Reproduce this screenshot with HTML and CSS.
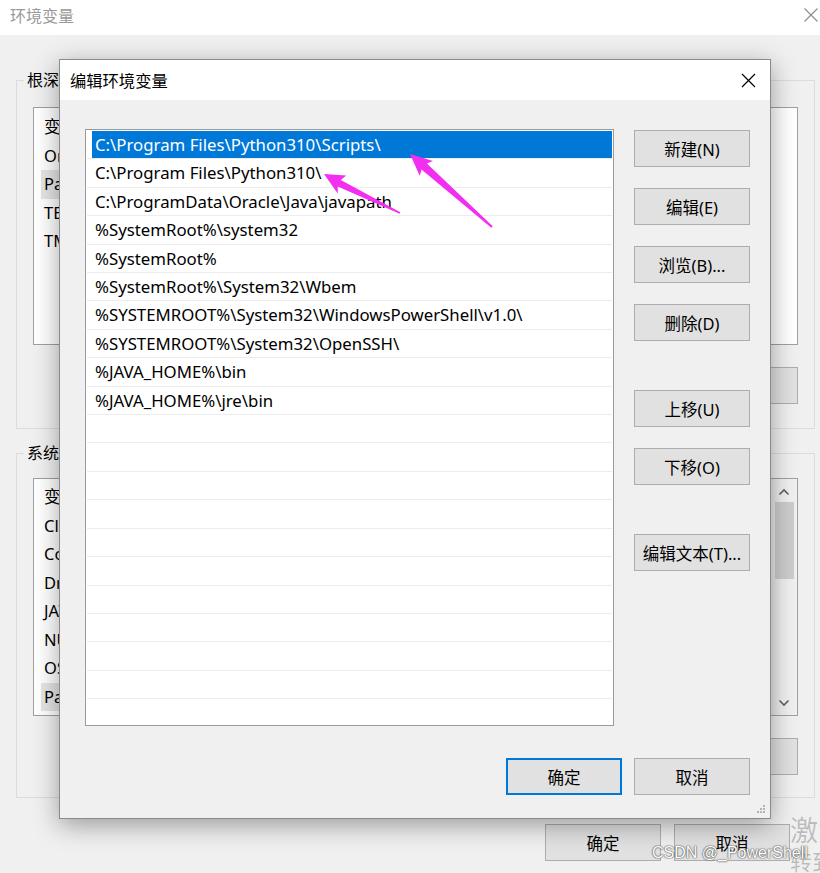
FILE: index.html
```html
<!DOCTYPE html>
<html lang="zh-CN">
<head>
<meta charset="utf-8">
<title>环境变量</title>
<link rel="stylesheet" href="styles.css">
</head>
<body>
<div class="win">
  <div class="win-title">
    <span class="win-title-text">环境变量</span>
    <svg class="win-close" width="14" height="14" viewBox="0 0 14 14"><path d="M0.5 0.5 L13.5 13.5 M13.5 0.5 L0.5 13.5" stroke="#8c8c8c" stroke-width="1.1" fill="none"/></svg>
  </div>
  <div class="win-body">
    <fieldset class="group">
      <legend>根深 的用户变量(U)</legend>
      <div class="group-in">
        <div class="lv">
          <div class="lv-rows">
            <div class="lv-row"><span class="c1">变量</span><span>值</span></div>
            <div class="lv-row"><span class="c1">OneDrive</span><span>C:\Users\根深\OneDrive</span></div>
            <div class="lv-row hl"><span class="c1">Path</span><span>C:\Program Files\Python310\Scripts\;...</span></div>
            <div class="lv-row"><span class="c1">TEMP</span><span>%USERPROFILE%\AppData\Local\Temp</span></div>
            <div class="lv-row"><span class="c1">TMP</span><span>%USERPROFILE%\AppData\Local\Temp</span></div>
          </div>
        </div>
        <div class="btn-row">
          <button class="btn">新建(N)...</button>
          <button class="btn">编辑(E)...</button>
          <button class="btn">删除(D)</button>
        </div>
      </div>
    </fieldset>
    <fieldset class="group group-sys">
      <legend>系统变量(S)</legend>
      <div class="group-in">
        <div class="lv lv-scroll">
          <div class="lv-rows">
            <div class="lv-row"><span class="c1">变量</span><span>值</span></div>
            <div class="lv-row"><span class="c1">ClassPath</span><span>.;%JAVA_HOME%\lib</span></div>
            <div class="lv-row"><span class="c1">ComSpec</span><span>C:\Windows\system32\cmd.exe</span></div>
            <div class="lv-row"><span class="c1">DriverData</span><span>C:\Windows\System32\Drivers\DriverData</span></div>
            <div class="lv-row"><span class="c1">JAVA_HOME</span><span>C:\Program Files\Java\jdk1.8.0</span></div>
            <div class="lv-row"><span class="c1">NUMBER_OF_PROCESSORS</span><span>8</span></div>
            <div class="lv-row"><span class="c1">OS</span><span>Windows_NT</span></div>
            <div class="lv-row hl"><span class="c1">Path</span><span>C:\ProgramData\Oracle\Java\javapath;...</span></div>
          </div>
          <div class="sb">
            <svg class="sb-arrow" width="12" height="8" viewBox="0 0 12 8"><path d="M1.5 6.5 L6 2 L10.5 6.5" stroke="#606060" stroke-width="1.6" fill="none"/></svg>
            <div class="sb-track"><div class="sb-thumb"></div></div>
            <svg class="sb-arrow" width="12" height="8" viewBox="0 0 12 8"><path d="M1.5 1.5 L6 6 L10.5 1.5" stroke="#606060" stroke-width="1.6" fill="none"/></svg>
          </div>
        </div>
        <div class="btn-row">
          <button class="btn">新建(W)...</button>
          <button class="btn">编辑(I)...</button>
          <button class="btn">删除(L)</button>
        </div>
      </div>
    </fieldset>
    <div class="win-foot">
      <button class="btn">确定</button>
      <button class="btn">取消</button>
    </div>
  </div>
</div>

<div class="dlg">
  <div class="dlg-title">
    <span>编辑环境变量</span>
    <svg width="15" height="15" viewBox="0 0 15 15"><path d="M1 1 L14 14 M14 1 L1 14" stroke="#000" stroke-width="1.2" fill="none"/></svg>
  </div>
  <div class="dlg-body">
    <div class="dlg-main">
      <div class="pathlist">
        <div class="prow sel"><span>C:\Program Files\Python310\Scripts\</span></div>
        <div class="prow"><span>C:\Program Files\Python310\</span></div>
        <div class="prow"><span>C:\ProgramData\Oracle\Java\javapath</span></div>
        <div class="prow"><span>%SystemRoot%\system32</span></div>
        <div class="prow"><span>%SystemRoot%</span></div>
        <div class="prow"><span>%SystemRoot%\System32\Wbem</span></div>
        <div class="prow"><span>%SYSTEMROOT%\System32\WindowsPowerShell\v1.0\</span></div>
        <div class="prow"><span>%SYSTEMROOT%\System32\OpenSSH\</span></div>
        <div class="prow"><span>%JAVA_HOME%\bin</span></div>
        <div class="prow"><span>%JAVA_HOME%\jre\bin</span></div>
        <div class="prow"><span></span></div>
        <div class="prow"><span></span></div>
        <div class="prow"><span></span></div>
        <div class="prow"><span></span></div>
        <div class="prow"><span></span></div>
        <div class="prow"><span></span></div>
        <div class="prow"><span></span></div>
        <div class="prow"><span></span></div>
        <div class="prow"><span></span></div>
        <div class="prow"><span></span></div>
        <div class="prow"><span></span></div>
      </div>
      <div class="side">
        <button class="btn">新建(N)</button>
        <button class="btn">编辑(E)</button>
        <button class="btn">浏览(B)...</button>
        <button class="btn">删除(D)</button>
        <button class="btn spaced">上移(U)</button>
        <button class="btn">下移(O)</button>
        <button class="btn spaced">编辑文本(T)...</button>
      </div>
    </div>
    <div class="dlg-foot">
      <button class="btn default">确定</button>
      <button class="btn">取消</button>
    </div>
  </div>
  <svg class="grip" width="10" height="10" viewBox="0 0 10 10">
    <rect x="7" y="1" width="2" height="2" fill="#b4b4b4"/>
    <rect x="4" y="4" width="2" height="2" fill="#b4b4b4"/>
    <rect x="7" y="4" width="2" height="2" fill="#b4b4b4"/>
    <rect x="1" y="7" width="2" height="2" fill="#b4b4b4"/>
    <rect x="4" y="7" width="2" height="2" fill="#b4b4b4"/>
    <rect x="7" y="7" width="2" height="2" fill="#b4b4b4"/>
  </svg>
</div>

<svg class="annot" width="820" height="873" viewBox="0 0 820 873">
  <polygon fill="#f22ff0" points="410,154 433,161.1 426.9,163.6 492.7,226.3 491.3,227.7 421.5,169.6 419.8,176.1"/>
  <polygon fill="#f22ff0" points="324,174 346.3,175.6 340.8,180.1 400.3,212.3 399.7,213.7 337.8,186.5 337.7,193.6"/>
</svg>

<div class="activate">激活 Windows<span class="activate-sub">转到“设置”以激活 Windows。</span></div>
<div class="csdn">CSDN @_PowerShell</div>
</body>
</html>
```

FILE: styles.css
```css
* { box-sizing: border-box; }
html, body { margin: 0; padding: 0; }
body {
  width: 820px;
  height: 873px;
  overflow: hidden;
  position: relative;
  background: #f0f0f0;
  color: #000;
  font-family: "Noto Sans", "Noto Sans CJK SC", sans-serif;
  font-size: 15px;
}

/* background window */
.win-title {
  height: 35px;
  background: #fff;
  display: flex;
  align-items: center;
  justify-content: space-between;
  padding: 0 2px 5px 10px;
}
.win-title-text { color: #9a9a9a; font-size: 16px; }
.win-close { display: block; }

.win-body { padding: 37px 5px 0 16px; }

.group {
  margin: 0;
  padding: 0;
  min-width: 0;
  border: 1px solid #dcdcdc;
}
.group legend {
  margin-left: 7px;
  padding: 0 3px;
  font-size: 16px;
  line-height: 16px;
  height: 16px;
  white-space: nowrap;
}
.group-in { padding: 19px 16px 24px 16px; }
.group-sys { margin-top: 16px; }
.group-sys .group-in { padding: 17px 16px 22px 16px; }

.lv {
  height: 238px;
  border: 1px solid #a0a0a0;
  background: #fff;
  padding: 5px 0 0 7px;
  overflow: hidden;
}
.lv-scroll { display: flex; padding: 0 0 0 7px; }
.lv-scroll .lv-rows { flex: 1; padding-top: 4px; }
.lv-row {
  height: 28.5px;
  line-height: 28.5px;
  padding-left: 3px;
  white-space: nowrap;
  font-size: 16.5px;
  display: flex;
  width: calc(100% - 30px);
}
.lv-row .c1 { width: 230px; flex: none; }
.lv-row.hl { background: #e5e5e5; }

.sb {
  width: 26px;
  flex: none;
  background: linear-gradient(to right, #e6e6e6, #f0f0f0 40%);
  display: flex;
  flex-direction: column;
  align-items: center;
  padding: 9px 0 8px;
}
.sb-arrow { display: block; flex: none; }
.sb-track { flex: 1; width: 100%; padding: 6px 3px 8px 4px; }
.sb-thumb { height: 77px; background: #cdcdcd; }

.btn-row {
  margin-top: 22px;
  display: flex;
  justify-content: flex-end;
  gap: 13px;
}
.win-foot {
  margin-top: 26px;
  display: flex;
  justify-content: flex-end;
  gap: 13px;
  padding-right: 25px;
}

.btn {
  width: 116px;
  height: 37px;
  padding: 0;
  background: #e1e1e1;
  border: 1px solid #adadad;
  border-radius: 0;
  color: #000;
  font-family: "Noto Sans", "Noto Sans CJK SC", sans-serif;
  font-size: 16.5px;
  white-space: nowrap;
}
.btn.default { border: 2px solid #0078d7; }

/* edit dialog */
.dlg {
  position: absolute;
  left: 59px;
  top: 59px;
  width: 712px;
  height: 760px;
  border: 1px solid #8a8a8a;
  background: #f0f0f0;
  box-shadow: 0 6px 24px rgba(0, 0, 0, 0.36);
  display: flex;
  flex-direction: column;
}
.dlg-title {
  height: 40px;
  flex: none;
  background: #fff;
  display: flex;
  align-items: center;
  justify-content: space-between;
  padding: 0 14px 0 10px;
  font-size: 16.3px;
}
.dlg-title svg { display: block; }
.dlg-body {
  flex: 1;
  padding: 29px 20px 23px 25px;
  display: flex;
  flex-direction: column;
}
.dlg-main { display: flex; gap: 20px; }
.pathlist {
  width: 529px;
  height: 597px;
  flex: none;
  border: 1px solid #9a9a9a;
  background: #fff;
  padding: 1px;
  overflow: hidden;
}
.prow {
  height: 28.42px;
  border-bottom: 1px solid #ececec;
  padding-left: 5px;
}
.prow span {
  display: block;
  height: 100%;
  padding-left: 3px;
  line-height: 27.4px;
  white-space: nowrap;
  font-size: 16.8px;
}
.prow.sel span { background: #0078d7; color: #fff; }

.side {
  display: flex;
  flex-direction: column;
  gap: 21px;
  padding-top: 1px;
}
.side .spaced { margin-top: 28px; }

.dlg-foot {
  margin-top: 32px;
  display: flex;
  justify-content: flex-end;
  gap: 12px;
}
.grip { position: absolute; right: 4px; bottom: 4px; display: block; }

/* overlays */
.annot { position: absolute; left: 0; top: 0; pointer-events: none; }
.activate {
  position: absolute;
  left: 790px;
  top: 813px;
  color: rgba(0, 0, 0, 0.22);
  font-size: 28px;
  line-height: 34px;
  white-space: nowrap;
}
.activate-sub { display: block; font-size: 22px; line-height: 28px; }
.csdn {
  position: absolute;
  left: 652px;
  top: 844px;
  font-family: "Liberation Sans", sans-serif;
  font-size: 16px;
  color: #fff;
  white-space: nowrap;
  text-shadow: 0 0 1px #555, 0 0 1px #555, 0 0 2px #777;
}
```
